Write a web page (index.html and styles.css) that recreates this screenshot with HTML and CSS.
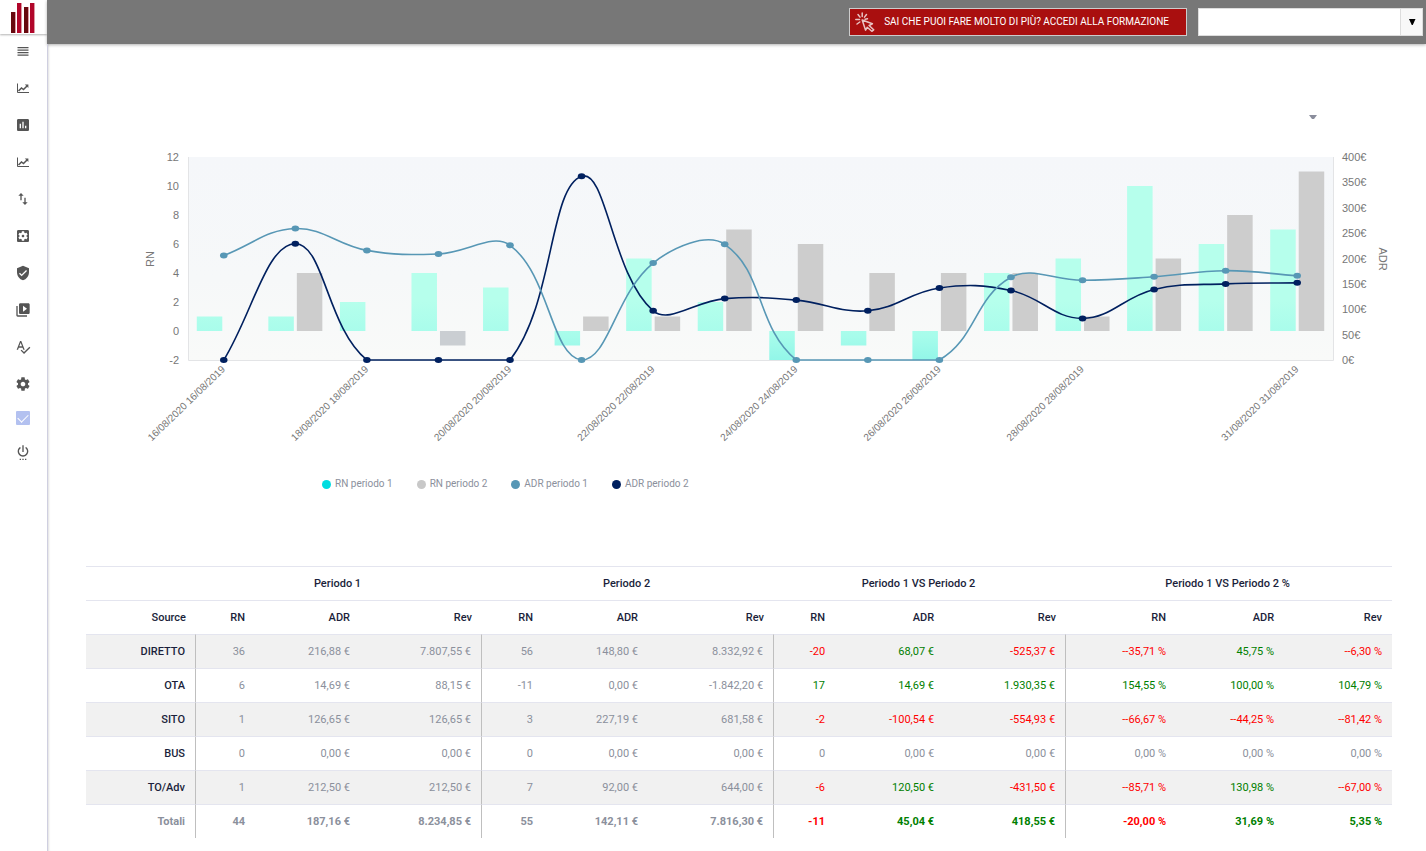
FILE: index.html
```html
<!DOCTYPE html>
<html lang="it">
<head>
<meta charset="utf-8">
<meta name="viewport" content="width=device-width, initial-scale=1">
<title>Confronto periodi</title>
<link rel="stylesheet" href="styles.css">
</head>
<body>
<div class="app">
  <aside class="sidebar">
    <a class="logo" href="#" aria-label="Home">
      <svg width="27" height="32" viewBox="0 0 27 32">
        <rect x="1" y="10" width="4" height="21" fill="#68090f"/>
        <rect x="7" y="1" width="4" height="30" fill="#b1062a"/>
        <rect x="14" y="5" width="4" height="26" fill="#68090f"/>
        <rect x="20" y="1" width="4" height="30" fill="#b1062a"/>
        <path d="M5.500 10v21M11.500 1v30M18.500 5v26M24.500 1v30" stroke="#dc9aa4"/>
      </svg>
    </a>
    <nav class="menu">
      <a href="#" aria-label="Menu"><svg viewBox="0 0 16 16"><path d="M2.500 4h11v1.200h-11zM2.500 6.500h11v1.200h-11zM2.500 9.100h11v1.200h-11zM2.500 11.600h11v1.200h-11z"/></svg></a>
      <a href="#" aria-label="Andamento"><svg viewBox="0 0 16 16"><path d="M2.500 3.500v9H14" fill="none" stroke="currentColor" stroke-width="1"/><path d="M3.500 11L6.500 8l2 1.500 3.500-3.500" fill="none" stroke="currentColor" stroke-width="1.500"/><path d="M9.800 4.500H13.400v3.600z"/></svg></a>
      <a href="#" aria-label="Report"><svg viewBox="0 0 24 24"><path d="M19 3H5c-1.100 0-2 .9-2 2v14c0 1.100.9 2 2 2h14c1.100 0 2-.9 2-2V5c0-1.100-.9-2-2-2zM9 17H7v-7h2v7zm4 0h-2V7h2v10zm4 0h-2v-4h2v4z"/></svg></a>
      <a href="#" aria-label="Confronto"><svg viewBox="0 0 16 16"><path d="M2.500 3.500v9H14" fill="none" stroke="currentColor" stroke-width="1"/><path d="M3.500 11L6.500 8l2 1.500 3.500-3.500" fill="none" stroke="currentColor" stroke-width="1.500"/><path d="M9.800 4.500H13.400v3.600z"/></svg></a>
      <a href="#" aria-label="Scambio"><svg viewBox="0 0 24 24"><path d="M16 17.010V10h-2v7.010h-3L15 21l4-3.990h-3zM9 3L5 6.990h3V14h2V6.990h3L9 3z"/></svg></a>
      <a href="#" aria-label="Applicazioni"><svg viewBox="0 0 24 24"><path d="M12 10c-1.100 0-2 .9-2 2s.9 2 2 2 2-.9 2-2-.9-2-2-2zm7-7H5c-1.110 0-2 .9-2 2v14c0 1.100.89 2 2 2h14c1.110 0 2-.9 2-2V5c0-1.100-.89-2-2-2zm-1.750 9c0 .23-.02.46-.05.68l1.480 1.160c.13.110.17.3.08.450l-1.400 2.420c-.09.150-.27.210-.43.150l-1.740-.7c-.36.280-.76.510-1.180.69l-.26 1.850c-.03.170-.18.3-.35.3h-2.800c-.17 0-.32-.13-.35-.29l-.26-1.850c-.43-.18-.82-.41-1.180-.69l-1.740.7c-.16.060-.34 0-.43-.15l-1.400-2.420c-.09-.15-.05-.34.080-.45l1.480-1.160c-.03-.23-.05-.46-.05-.69s.02-.46.050-.68l-1.480-1.160c-.13-.11-.17-.3-.08-.45l1.400-2.420c.09-.15.270-.21.430-.15l1.740.7c.36-.28.760-.51 1.180-.69l.26-1.850c.03-.17.180-.3.350-.3h2.800c.17 0 .32.130.35.290l.26 1.850c.43.180.82.410 1.180.69l1.740-.7c.16-.06.340 0 .430.150l1.400 2.420c.09.150.05.340-.08.450l-1.480 1.160c.03.230.05.460.05.690z"/></svg></a>
      <a href="#" aria-label="Sicurezza"><svg viewBox="0 0 24 24"><path d="M12 1L3 5v6c0 5.550 3.840 10.740 9 12 5.160-1.260 9-6.450 9-12V5l-9-4zm-2 16l-4-4 1.410-1.410L10 14.170l6.590-6.590L18 9l-8 8z"/></svg></a>
      <a href="#" aria-label="Video"><svg viewBox="0 0 24 24"><path d="M4 6H2v14c0 1.100.9 2 2 2h14v-2H4V6zm16-4H8c-1.100 0-2 .9-2 2v12c0 1.100.9 2 2 2h12c1.100 0 2-.9 2-2V4c0-1.100-.9-2-2-2zm-8 12.500v-9l6 4.500-6 4.500z"/></svg></a>
      <a href="#" aria-label="Testi"><svg viewBox="0 0 24 24"><path d="M12.450 16h2.090L9.430 3H7.570L2.460 16h2.090l1.120-3h5.640l1.140 3zm-6.020-5L8.500 5.480 10.570 11H6.430zm15.160.59l-8.090 8.090L9.830 16l-1.410 1.410 5.090 5.090L23 13l-1.410-1.410z"/></svg></a>
      <div class="menu-end">
        <a href="#" aria-label="Impostazioni"><svg viewBox="0 0 24 24"><path d="M19.430 12.980c.04-.32.070-.64.070-.98s-.03-.66-.07-.98l2.110-1.650c.19-.15.240-.42.120-.64l-2-3.460c-.12-.22-.39-.3-.61-.22l-2.490 1c-.52-.4-1.080-.73-1.690-.98l-.38-2.650C14.460 2.180 14.250 2 14 2h-4c-.25 0-.46.180-.49.420l-.38 2.650c-.61.250-1.170.59-1.690.98l-2.490-1c-.23-.09-.49 0-.61.220l-2 3.460c-.13.220-.07.490.12.640l2.110 1.650c-.04.320-.07.650-.07.980s.03.660.07.980l-2.110 1.650c-.19.150-.24.420-.12.640l2 3.460c.12.220.39.3.61.220l2.490-1c.52.4 1.080.73 1.690.98l.38 2.650c.03.240.24.420.49.420h4c.25 0 .46-.18.490-.42l.38-2.650c.61-.25 1.170-.59 1.690-.98l2.490 1c.23.090.49 0 .61-.22l2-3.460c.12-.22.070-.49-.12-.64l-2.110-1.650zM12 15.500c-1.930 0-3.500-1.570-3.500-3.500s1.570-3.500 3.500-3.500 3.500 1.570 3.500 3.500-1.570 3.500-3.500 3.500z"/></svg></a>
        <label class="check"><input type="checkbox" checked aria-label="Attivo"></label>
        <a href="#" aria-label="Esci"><svg viewBox="0 0 24 24"><path d="M7 24h2v-2H7v2zm4 0h2v-2h-2v2zm2-22h-2v10h2V2zm3.560 2.440l-1.450 1.450C16.840 6.940 18 8.830 18 11c0 3.310-2.690 6-6 6s-6-2.690-6-6c0-2.170 1.160-4.060 2.880-5.120L7.440 4.440C5.360 5.880 4 8.280 4 11c0 4.420 3.580 8 8 8s8-3.580 8-8c0-2.720-1.360-5.120-3.440-6.560zM15 24h2v-2h-2v2z"/></svg></a>
      </div>
    </nav>
  </aside>

  <div class="page">
    <header class="topbar">
      <button class="training" type="button">
        <svg width="20" height="20" viewBox="0 0 20 20" fill="none" stroke="currentColor" stroke-width="1.500" stroke-linecap="round" stroke-linejoin="round"><path d="M7.200 1v3.500M3 2.500l2 2.600M11.500 2.500L9.500 5.100M.8 7.500h3.700M2 12l2.800-2M10 7.200l2.500-.4"/><path d="M7.200 8l10.200 3.800-3.300 1.700 4.600 4.300-1.900 1.500-4.600-4-1.600 2.900z"/></svg>
        <span>SAI CHE PUOI FARE MOLTO DI PIÙ? ACCEDI ALLA FORMAZIONE</span>
      </button>
      <div class="combo">
        <input type="text" aria-label="Struttura">
        <button type="button" aria-label="Apri elenco"><svg width="8" height="8" viewBox="0 0 8 8"><path d="M1 1h6.500L4.750 7h-1z"/></svg></button>
      </div>
    </header>

    <main class="content">
      <div class="tools">
        <button class="caret" type="button" aria-label="Opzioni grafico"><svg width="8" height="4" viewBox="0 0 8 4"><path d="M0 0h8L5 4H3z"/></svg></button>
      </div>
      <svg class="chart" id="chart" viewBox="0 0 1252 306" role="img" aria-label="RN e ADR per giorno">
        <defs>
          <linearGradient id="plotFill" x1="0" y1="0" x2="0" y2="1"><stop offset="0" stop-color="#f5f7fa"/><stop offset=".6" stop-color="#f6f8f9"/><stop offset="1" stop-color="#f9faf9"/></linearGradient>
          <linearGradient id="tealFill" gradientUnits="userSpaceOnUse" x1="0" y1="155" x2="0" y2="215"><stop offset="0" stop-color="#b6ffec"/><stop offset=".6" stop-color="#a7fceb"/><stop offset="1" stop-color="#92f6e8"/></linearGradient>
          <clipPath id="plotClip"><rect x="48" y="12" width="1146" height="204"/></clipPath>
        </defs>
      </svg>
      <ul class="legend">
        <li><i class="dot dot-rn1"></i>RN periodo 1</li>
        <li><i class="dot dot-rn2"></i>RN periodo 2</li>
        <li><i class="dot dot-adr1"></i>ADR periodo 1</li>
        <li><i class="dot dot-adr2"></i>ADR periodo 2</li>
      </ul>

      <table class="report">
        <colgroup>
          <col class="c-source"><col class="c-rn"><col class="c-adr"><col class="c-rev">
          <col class="c-rn2"><col class="c-adr"><col class="c-rev2">
          <col class="c-rn2"><col class="c-adr2"><col class="c-rev">
          <col class="c-pct-rn"><col class="c-pct"><col class="c-pct">
        </colgroup>
        <thead>
          <tr class="groups"><th></th><th colspan="3">Periodo 1</th><th colspan="3">Periodo 2</th><th colspan="3">Periodo 1 VS Periodo 2</th><th colspan="3">Periodo 1 VS Periodo 2 %</th></tr>
          <tr><th>Source</th><th>RN</th><th>ADR</th><th>Rev</th><th>RN</th><th>ADR</th><th>Rev</th><th>RN</th><th>ADR</th><th>Rev</th><th>RN</th><th>ADR</th><th>Rev</th></tr>
        </thead>
        <tbody>
          <tr><th>DIRETTO</th><td>36</td><td>216,88 €</td><td class="end">7.807,55 €</td><td>56</td><td>148,80 €</td><td class="end">8.332,92 €</td><td class="neg">-20</td><td class="pos">68,07 €</td><td class="neg end">-525,37 €</td><td class="neg">--35,71 %</td><td class="pos">45,75 %</td><td class="neg">--6,30 %</td></tr>
          <tr><th>OTA</th><td>6</td><td>14,69 €</td><td class="end">88,15 €</td><td>-11</td><td>0,00 €</td><td class="end">-1.842,20 €</td><td class="pos">17</td><td class="pos">14,69 €</td><td class="pos end">1.930,35 €</td><td class="pos">154,55 %</td><td class="pos">100,00 %</td><td class="pos">104,79 %</td></tr>
          <tr><th>SITO</th><td>1</td><td>126,65 €</td><td class="end">126,65 €</td><td>3</td><td>227,19 €</td><td class="end">681,58 €</td><td class="neg">-2</td><td class="neg">-100,54 €</td><td class="neg end">-554,93 €</td><td class="neg">--66,67 %</td><td class="neg">--44,25 %</td><td class="neg">--81,42 %</td></tr>
          <tr><th>BUS</th><td>0</td><td>0,00 €</td><td class="end">0,00 €</td><td>0</td><td>0,00 €</td><td class="end">0,00 €</td><td>0</td><td>0,00 €</td><td class="end">0,00 €</td><td>0,00 %</td><td>0,00 %</td><td>0,00 %</td></tr>
          <tr><th>TO/Adv</th><td>1</td><td>212,50 €</td><td class="end">212,50 €</td><td>7</td><td>92,00 €</td><td class="end">644,00 €</td><td class="neg">-6</td><td class="pos">120,50 €</td><td class="neg end">-431,50 €</td><td class="neg">--85,71 %</td><td class="pos">130,98 %</td><td class="neg">--67,00 %</td></tr>
          <tr class="total"><th>Totali</th><td>44</td><td>187,16 €</td><td class="end">8.234,85 €</td><td>55</td><td>142,11 €</td><td class="end">7.816,30 €</td><td class="neg">-11</td><td class="pos">45,04 €</td><td class="pos end">418,55 €</td><td class="neg">-20,00 %</td><td class="pos">31,69 %</td><td class="pos">5,35 %</td></tr>
        </tbody>
      </table>
    </main>
  </div>
</div>
<script src="chart.js"></script>
</body>
</html>
```
FILE: styles.css
```css
* { box-sizing: border-box; }

body {
  margin: 0;
  background: #fff;
  color: #8b909c;
  font-family: Roboto, "Liberation Sans", sans-serif;
  font-size: 11px;
}

button { font: inherit; cursor: pointer; }

.app { display: flex; min-height: 100vh; }

.sidebar {
  flex: none;
  width: 47px;
  background: #fff;
}

.logo {
  display: flex;
  justify-content: center;
  height: 34px;
  padding-top: 2px;
  margin-bottom: 9px;
  box-shadow: 0 1px 2px rgba(0, 0, 0, .3);
}

.menu, .menu-end {
  display: flex;
  flex-direction: column;
  align-items: center;
  gap: 21px;
}
.menu-end { gap: 18px; }
.menu { padding-right: 1px; }
.menu a { display: block; height: 16px; color: #555; }
.menu svg { display: block; width: 16px; height: 16px; fill: currentColor; }

.check { display: flex; align-items: center; height: 16px; }
.check input {
  appearance: none;
  display: grid;
  place-items: center;
  width: 14px;
  height: 14px;
  margin: 0;
  border-radius: 1px;
  background: #b3c1f0;
}
.check input::before {
  content: "";
  width: 9px;
  height: 5px;
  margin-bottom: 2px;
  border: solid #fff;
  border-width: 0 0 1px 1px;
  transform: rotate(-45deg);
}

.page { display: flex; flex-direction: column; flex: 1; min-width: 0; }

.topbar {
  display: flex;
  justify-content: flex-end;
  align-items: center;
  gap: 11px;
  height: 44px;
  padding-right: 3px;
  background: #777;
  box-shadow: 0 1px 3px rgba(0, 0, 0, .3);
}

.training {
  display: flex;
  align-items: center;
  gap: 9px;
  height: 28px;
  padding: 0 17px 2px 5px;
  border: 1px solid #ccc;
  background: #a90f0f;
  color: #fff;
  font-size: 10px;
}
.training svg { opacity: .75; margin-top: 2px; }

.combo {
  display: flex;
  width: 225px;
  height: 28px;
  border: 1px solid #ddd;
}
.combo input { flex: 1; min-width: 0; border: 0; padding: 0 8px; background: #fff; }
.combo button {
  display: grid;
  place-items: center;
  width: 22px;
  padding: 0;
  border: 0;
  border-left: 1px solid #ddd;
  background: #f8f8f8;
}

.content {
  flex: 1;
  padding: 70px 34px 13px 38px;
  border-left: 1px solid #cfcfe0;
  box-shadow: inset 2px 0 2px -1px rgba(0, 0, 0, .12);
}

.tools { display: flex; justify-content: flex-end; padding-right: 74px; }
.caret { display: flex; padding: 1px; border: 0; background: none; }
.caret svg { fill: #8a8d9c; }

.chart { display: block; width: calc(100% - 54px); margin: 25px 0 0 54px; overflow: visible; }
.axis { font-family: "Liberation Sans", Arial, sans-serif; font-size: 11px; fill: #777; }
.axis-date { font-family: "Liberation Sans", Arial, sans-serif; font-size: 10px; fill: #777; text-anchor: end; }
.axis-name { text-anchor: middle; }
.axis-left { text-anchor: end; }

.legend {
  display: flex;
  gap: 24px;
  margin: 27px 0 0 236px;
  padding: 0;
  list-style: none;
  font-size: 10px;
  line-height: 12px;
}
.legend li { display: flex; align-items: center; gap: 4px; }
.dot { width: 9px; height: 9px; border-radius: 50%; }
.dot-rn1 { background: #00dde0; }
.dot-rn2 { background: #c8c8c8; }
.dot-adr1 { background: #5797b5; }
.dot-adr2 { background: #00205f; }

.report {
  width: 100%;
  margin-top: 76px;
  border-collapse: separate;
  border-spacing: 0;
  table-layout: fixed;
  text-align: right;
}
.report th, .report td { height: 34px; padding: 0 10px; border-top: 1px solid #e4e5ef; }
.report th { color: #1b1f3b; font-weight: 500; }
.report .groups th { padding-right: 13px; text-align: center; }
.report tbody tr:nth-child(odd) { background: #f1f1f1; }
.report tbody th, .report .end { border-right: 1px solid #bfbfbf; }
.report .pos { color: #008000; }
.report .neg { color: #f00; }
.report .total td, .report .total th { font-weight: 700; }
.report .total th { color: #8b909c; }
.c-source { width: 110px; }
.c-rn { width: 59px; }
.c-rn2 { width: 61px; }
.c-adr { width: 105px; }
.c-adr2 { width: 109px; }
.c-rev { width: 122px; }
.c-rev2 { width: 126px; }
.c-pct-rn { width: 110px; }
.c-pct { width: 108px; }
```
FILE: chart.js
```js
(function () {
  const svg = document.getElementById('chart');
  const NS = 'http://www.w3.org/2000/svg';
  const area = { left: 48, right: 1193, top: 12, bottom: 215 };
  const step = (area.right - area.left) / 16;
  const xs = Array.from({ length: 16 }, (_, i) => area.left + step * (i + 0.5));
  const yRn = v => area.bottom - (v + 2) * (area.bottom - area.top) / 14;
  const yAdr = v => area.bottom - v * (area.bottom - area.top) / 400;

  const rn1 = [1, 1, 2, 4, 3, -1, 5, 2, -2, -1, -2, 4, 5, 10, 6, 7];
  const rn2 = [0, 4, 0, -1, 0, 1, 1, 7, 6, 4, 4, 4, 1, 5, 8, 11];
  const adr1 = [206, 259, 216, 209, 226, 0, 191, 228, 0, 0, 0, 163, 157, 164, 176, 166];
  const adr2 = [0, 229, 0, 0, 0, 362, 97, 121, 118, 97, 142, 137, 82, 139, 150, 152];

  function add(name, attrs, text) {
    const el = document.createElementNS(NS, name);
    for (const k in attrs) el.setAttribute(k, attrs[k]);
    if (text !== undefined) el.textContent = text;
    svg.appendChild(el);
    return el;
  }

  function bars(values, offset, fill, negFill) {
    values.forEach((v, i) => {
      if (!v) return;
      const top = yRn(Math.max(v, 0));
      add('rect', { x: xs[i] + offset, y: top, width: 25.5, height: yRn(Math.min(v, 0)) - top, fill: v < 0 ? negFill : fill });
    });
  }

  // Smoothed line: control points follow the neighbours and stay inside the plot.
  function line(values, color) {
    const p = values.map((v, i) => ({ x: xs[i], y: yAdr(v) }));
    const ratio = 1.3, tension = 0.4;
    const clamp = y => Math.min(area.bottom, Math.max(area.top, y));
    const dist = (a, b) => Math.hypot((a.x - b.x) / ratio, a.y - b.y);
    const ctrl = p.map((c, i) => {
      const a = p[i - 1] || c, b = p[i + 1] || c;
      const d1 = dist(a, c), d2 = dist(c, b), f1 = tension * d1 / (d1 + d2), f2 = tension * d2 / (d1 + d2);
      return {
        px: c.x - f1 * (b.x - a.x), py: clamp(c.y - f1 * (b.y - a.y)),
        nx: c.x + f2 * (b.x - a.x), ny: clamp(c.y + f2 * (b.y - a.y))
      };
    });
    let d = `M${p[0].x} ${p[0].y}`;
    for (let i = 1; i < p.length; i++) {
      d += `C${ctrl[i - 1].nx} ${ctrl[i - 1].ny} ${ctrl[i].px} ${ctrl[i].py} ${p[i].x} ${p[i].y}`;
    }
    add('path', { d, fill: 'none', stroke: color, 'stroke-width': 1.6, 'clip-path': 'url(#plotClip)' });
    p.forEach(c => add('ellipse', { cx: c.x, cy: c.y, rx: 3.8, ry: 3, fill: color }));
  }

  add('rect', { x: area.left, y: area.top, width: area.right - area.left, height: area.bottom - area.top, fill: 'url(#plotFill)' });
  add('path', { d: `M${area.left + .5} ${area.top}V${area.bottom + .5}H${area.right + .5}V${area.top}`, fill: 'none', stroke: '#e3e4e6' });

  bars(rn1, -27, 'url(#tealFill)', 'url(#tealFill)');
  bars(rn2, 1.5, '#cdcdcd', '#caced2');
  line(adr2, '#00205f');
  line(adr1, '#5797b5');

  for (let v = -2; v <= 12; v += 2) add('text', { x: 39, y: yRn(v) + 4, class: 'axis axis-left' }, v);
  for (let v = 0; v <= 400; v += 50) add('text', { x: 1202, y: yAdr(v) + 4, class: 'axis' }, v + '€');
  add('text', { transform: 'translate(14 114) rotate(-90)', class: 'axis axis-name' }, 'RN');
  add('text', { transform: 'translate(1239 114) rotate(90)', class: 'axis axis-name' }, 'ADR');

  [0, 2, 4, 6, 8, 10, 12, 15].forEach(i => {
    const day = 16 + i;
    add('text', { transform: `translate(${xs[i] + 2} 225) rotate(-44)`, class: 'axis-date' }, `${day}/08/2020 ${day}/08/2019`);
  });
})();
```
